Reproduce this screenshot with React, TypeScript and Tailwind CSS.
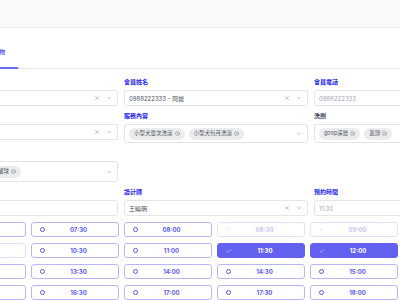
import React from 'react';
import { X, ChevronDown, CircleX, Check } from 'lucide-react';

type Slot = { time: string; state?: 'open' | 'off' | 'on' };

const slots: Slot[] = [
    { time: '07:00' }, { time: '07:30' }, { time: '08:00' }, { time: '08:30', state: 'off' }, { time: '09:00', state: 'off' }, { time: '09:30' },
    { time: '10:00', state: 'off' }, { time: '10:30' }, { time: '11:00' }, { time: '11:30', state: 'on' }, { time: '12:00', state: 'on' }, { time: '12:30' },
    { time: '13:00' }, { time: '13:30' }, { time: '14:00' }, { time: '14:30' }, { time: '15:00' }, { time: '15:30' },
    { time: '16:00' }, { time: '16:30' }, { time: '17:00' }, { time: '17:30' }, { time: '18:00' }, { time: '18:30' },
];

const Label: React.FC<{ text: string; plain?: boolean }> = ({ text, plain }) => (
    <div className={`h-[8px] leading-[8px] text-[6px] font-bold mb-[4px] ${plain ? 'text-[#374151]' : 'text-[#2626ee]'}`}>
        {text}
    </div>
);

const Tag: React.FC<{ text: string }> = ({ text }) => (
    <span className="flex items-center gap-[2px] h-[12px] px-[5px] rounded-full bg-[#ececee] text-[#4b5563] text-[5.5px] whitespace-nowrap">
        {text}
        <CircleX className="w-[5px] h-[5px] text-[#6b7280]" strokeWidth={2} />
    </span>
);

const Select: React.FC<{ value?: string; muted?: boolean; clear?: boolean; arrow?: boolean; children?: React.ReactNode; h?: string }> = ({
    value,
    muted,
    clear,
    arrow,
    children,
    h = 'h-[16px]',
}) => (
    <div className={`${h} flex items-center border border-[#e3e5e9] rounded-[3px] bg-white pl-[4px] pr-[5px]`}>
        <div className="flex-1 flex items-center gap-[4px] overflow-hidden">
            {value && <span className={`text-[6px] whitespace-nowrap ${muted ? 'text-[#a3a8b3]' : 'text-[#4b5563]'}`}>{value}</span>}
            {children}
        </div>
        {clear && <X className="w-[6px] h-[6px] text-[#6b7280] mr-[6px]" strokeWidth={1.6} />}
        {arrow && <ChevronDown className="w-[6px] h-[6px] text-[#6b7280]" strokeWidth={1.6} />}
    </div>
);

const SlotBox: React.FC<{ slot: Slot }> = ({ slot }) => {
    const state = slot.state ?? 'open';
    const box =
        state === 'on'
            ? 'bg-[#6461f0] border-[#6461f0] text-white'
            : state === 'off'
            ? 'bg-white border-[#e1e1fb] text-[#c5c5f3]'
            : 'bg-white border-[#b7b7f8] text-[#5b5bea]';
    return (
        <div className={`h-[15px] flex items-center border rounded-[3px] pl-[8px] pr-[6px] ${box}`}>
            {state === 'on' && <Check className="w-[6px] h-[6px]" strokeWidth={1.8} />}
            {state === 'off' && <X className="w-[5px] h-[5px]" strokeWidth={1.6} />}
            {state === 'open' && <span className="w-[5px] h-[5px] rounded-full border border-[#5b5bea]" />}
            <span className="flex-1 text-center text-[6px] font-bold leading-none">{slot.time}</span>
        </div>
    );
};

const App: React.FC = () => {
    return (
        <div className="w-[400px] h-[300px] overflow-hidden bg-white font-['Inter','Noto_Sans_CJK_TC',sans-serif]">
            {/* Top bar */}
            <div className="h-[28px] bg-[#f8f9fb] border-b border-[#eceef1]" />

            {/* Tabs */}
            <div className="h-[41px] flex items-end border-b border-[#e5e7eb]">
                <div className="ml-[-32px] -mb-px px-[13px] pb-[11px] border-b-2 border-[#6b6bf2] text-[6px] leading-[8px] font-bold text-[#5f5ff0]">
                    預約寵物
                </div>
            </div>

            {/* Form */}
            <div className="pt-[9px]">
                <div className="ml-[-66px] grid grid-cols-[184px_184px_184px] gap-x-[6px] gap-y-[6px] items-start">
                    <div>
                        <Label text="寵物名稱" />
                        <Select clear arrow />
                    </div>
                    <div>
                        <Label text="會員姓名" />
                        <Select value="0988222333 - 阿嬤" clear arrow />
                    </div>
                    <div>
                        <Label text="會員電話" />
                        <Select value="0988222333" muted />
                    </div>

                    <div>
                        <Label text="服務類型" />
                        <Select clear arrow />
                    </div>
                    <div>
                        <Label text="服務內容" />
                        <Select arrow h="h-[19px]">
                            <Tag text="小型犬單次洗澡" />
                            <Tag text="小型犬包月洗澡" />
                        </Select>
                    </div>
                    <div>
                        <Label text="洗劑" plain />
                        <Select arrow h="h-[19px]">
                            <Tag text="goop深層" />
                            <Tag text="蓋頭" />
                        </Select>
                    </div>

                    <div>
                        <Label text="加購" />
                        <Select arrow h="h-[21px]">
                            <Tag text="指甲修剪" />
                            <Tag text="潔牙罐球" />
                        </Select>
                    </div>
                    <div />
                    <div />

                    <div>
                        <Label text="預約日期" />
                        <Select />
                    </div>
                    <div>
                        <Label text="設計師" />
                        <Select value="王曉明" clear arrow />
                    </div>
                    <div>
                        <Label text="預約時間" />
                        <Select value="11:30" muted />
                    </div>
                </div>

                {/* Time slots */}
                <div className="mt-[6px] ml-[-62px] w-[553px] grid grid-cols-6 gap-x-[5px] gap-y-[6px]">
                    {slots.map((slot) => (
                        <SlotBox key={slot.time} slot={slot} />
                    ))}
                </div>
            </div>
        </div>
    );
};

export default App;
